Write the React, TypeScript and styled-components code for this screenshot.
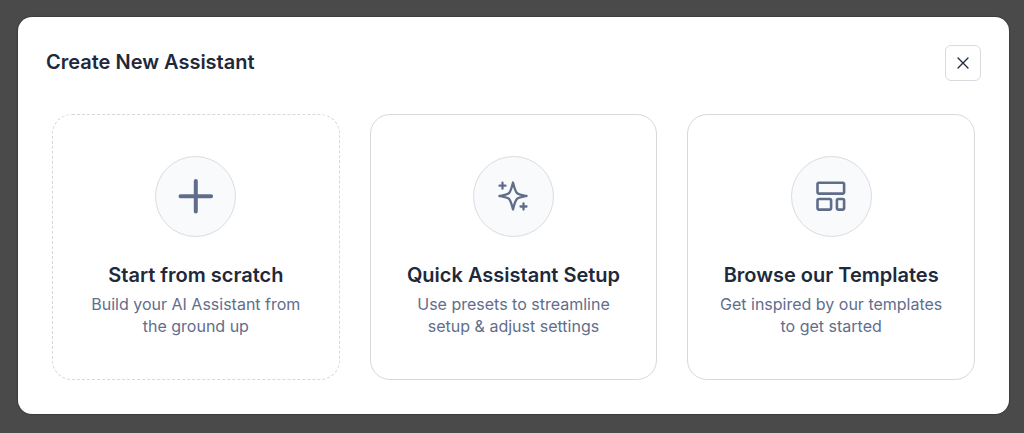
import React from "react";
import styled, { createGlobalStyle } from "styled-components";

const GlobalStyle = createGlobalStyle`
  *, *::before, *::after { box-sizing: border-box; }
  body {
    margin: 0;
    background: #4a4a4a;
    font-family: Inter, "Liberation Sans", sans-serif;
    -webkit-font-smoothing: antialiased;
  }
  button { font: inherit; color: inherit; cursor: pointer; }
`;

const Backdrop = styled.div`
  min-height: 100vh;
  padding: 17px 15px 19px 18px;
  background: #4a4a4a;
`;

const Dialog = styled.section`
  padding: 28px 28px 34px;
  border-radius: 14px;
  background: #ffffff;
  box-shadow: 0 0 1px 1px rgba(0, 0, 0, 0.2);
`;

const Header = styled.header`
  display: flex;
  align-items: flex-start;
  justify-content: space-between;
  margin-bottom: 33px;
`;

const Title = styled.h1`
  margin: 0;
  font-size: 20px;
  line-height: 34px;
  font-weight: 600;
  color: #1e293b;
`;

const CloseButton = styled.button`
  display: flex;
  align-items: center;
  justify-content: center;
  width: 36px;
  height: 36px;
  padding: 0;
  border: 1px solid #d9dbe0;
  border-radius: 6px;
  background: #ffffff;
  color: #1e293b;
`;

const Options = styled.div`
  display: grid;
  grid-template-columns: repeat(3, minmax(0, 1fr));
  gap: 30px;
  padding: 0 6px;
`;

const OptionCard = styled.button<{ $dashed?: boolean }>`
  display: flex;
  flex-direction: column;
  align-items: center;
  padding: 41px 28px 42px;
  border: 1px ${(p) => (p.$dashed ? "dashed" : "solid")} #d6d8dc;
  border-radius: 20px;
  background: #ffffff;
  text-align: center;
`;

const IconCircle = styled.span`
  display: flex;
  align-items: center;
  justify-content: center;
  width: 81px;
  height: 81px;
  margin-bottom: 24px;
  border: 1px solid #d9dce1;
  border-radius: 50%;
  background: #f8fafc;
`;

const OptionTitle = styled.span`
  margin-bottom: 4px;
  font-size: 20px;
  line-height: 28px;
  font-weight: 600;
  color: #1e293b;
`;

const OptionText = styled.span`
  font-size: 16px;
  line-height: 22px;
  color: #5f6e8c;
`;

const Stroke = styled.svg`
  display: block;
  fill: none;
  stroke: #606d8a;
  stroke-linecap: round;
  stroke-linejoin: round;
`;

const PlusIcon = () => (
  <Stroke width="39" height="39" viewBox="0.5 0.5 39 39" strokeWidth="4" aria-hidden="true">
    <path d="M20.300 4.500v30.500M5 19.700h30.600" />
  </Stroke>
);

const SparklesIcon = () => (
  <Stroke width="39" height="39" viewBox="0.5 0.5 39 39" strokeWidth="2.3" aria-hidden="true">
    <path d="M19.500 6C21.100 12.500 22.100 15.300 23.500 16.600C25 18 28 18.500 33 19.500C28 20.500 25 21 23.500 22.400C22.100 23.700 21.100 26.500 19.500 33C17.900 26.500 16.900 23.700 15.500 22.400C14 21 11 20.500 6 19.500C11 18.500 14 18 15.500 16.600C16.900 15.300 17.900 12.500 19.500 6Z" />
    <path d="M9 6.200v6M6 9.200h6M30 27v6M27 30h6" />
  </Stroke>
);

const TemplateIcon = () => (
  <Stroke width="39" height="39" viewBox="0.5 0.5 39 39" strokeWidth="2.6" aria-hidden="true">
    <rect x="6" y="6.300" width="26.600" height="10.800" rx="1.500" />
    <rect x="6" y="22.500" width="13.600" height="10.600" rx="1.500" />
    <rect x="25.400" y="22.500" width="7.200" height="10.600" rx="1.500" />
  </Stroke>
);

const CloseIcon = () => (
  <svg width="12" height="12" viewBox="0 0 12 12" fill="none" stroke="currentColor" strokeWidth="1.3" strokeLinecap="round" aria-hidden="true">
    <path d="M1 1l10 10M11 1L1 11" />
  </svg>
);

const options = [
  { title: "Start from scratch", text: "Build your AI Assistant from the ground up", Icon: PlusIcon, dashed: true },
  { title: "Quick Assistant Setup", text: "Use presets to streamline setup & adjust settings", Icon: SparklesIcon, dashed: false },
  { title: "Browse our Templates", text: "Get inspired by our templates to get started", Icon: TemplateIcon, dashed: false },
];

export default function App() {
  return (
    <>
      <GlobalStyle />
      <Backdrop>
        <Dialog role="dialog" aria-modal="true" aria-labelledby="dialog-title">
          <Header>
            <Title id="dialog-title">Create New Assistant</Title>
            <CloseButton type="button" aria-label="Close">
              <CloseIcon />
            </CloseButton>
          </Header>
          <Options>
            {options.map(({ title, text, Icon, dashed }) => (
              <OptionCard key={title} type="button" $dashed={dashed}>
                <IconCircle>
                  <Icon />
                </IconCircle>
                <OptionTitle>{title}</OptionTitle>
                <OptionText>{text}</OptionText>
              </OptionCard>
            ))}
          </Options>
        </Dialog>
      </Backdrop>
    </>
  );
}
